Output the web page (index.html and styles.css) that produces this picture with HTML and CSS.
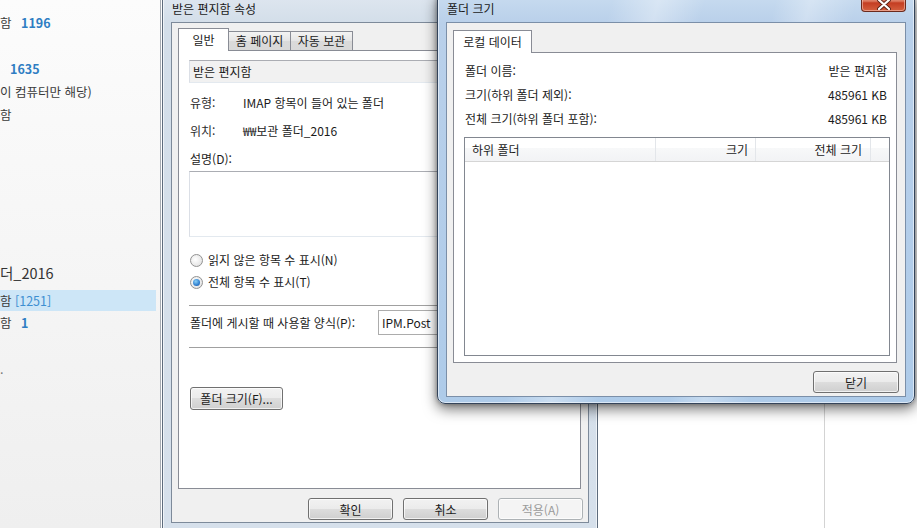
FILE: index.html
```html
<!DOCTYPE html>
<html lang="ko">
<head>
    <meta charset="UTF-8">
    <title>받은 편지함 속성 - 폴더 크기</title>
    <link rel="stylesheet" href="styles.css">
</head>
<body>
    <div class="outlook">
        <aside class="folders">
            <ul class="folder-list top-list">
                <li></li>
                <li>함 <span class="count">1196</span></li>
                <li></li>
                <li><span class="count first">1635</span></li>
                <li>이 컴퓨터만 해당)</li>
                <li>함</li>
            </ul>
            <ul class="folder-list group-list">
                <li class="group">더_2016</li>
                <li class="selected">함 <span class="unread">[1251]</span></li>
                <li>함 <span class="count">1</span></li>
                <li></li>
                <li class="tick">.</li>
            </ul>
        </aside>
        <main class="mail-area">
            <div class="pane-list"></div>
            <div class="pane-read"></div>
        </main>
    </div>

    <!-- properties dialog (inactive, behind) -->
    <div class="window props">
        <div class="titlebar"><span class="title">받은 편지함 속성</span></div>
        <div class="client">
            <div class="tabs">
                <span class="tab active tab-general">일반</span>
                <span class="tab tab-home">홈 페이지</span>
                <span class="tab tab-archive">자동 보관</span>
            </div>
            <div class="tab-panel">
                <div class="textbox readonly">받은 편지함</div>
                <div class="field"><span class="label">유형:</span><span>IMAP 항목이 들어 있는 폴더</span></div>
                <div class="field"><span class="label">위치:</span><span>₩₩보관 폴더_2016</span></div>
                <div class="caption">설명(D):</div>
                <div class="textbox memo"></div>
                <div class="radio first-radio"><span class="bullet"></span>읽지 않은 항목 수 표시(N)</div>
                <div class="radio checked"><span class="bullet"></span>전체 항목 수 표시(T)</div>
                <hr class="etched">
                <div class="form-row">
                    <span class="form-label">폴더에 게시할 때 사용할 양식(P):</span>
                    <span class="combo">IPM.Post</span>
                </div>
                <hr class="etched second">
                <button class="btn btn-size">폴더 크기(F)...</button>
            </div>
            <div class="dlg-buttons">
                <button class="btn">확인</button>
                <button class="btn">취소</button>
                <button class="btn" disabled>적용(A)</button>
            </div>
        </div>
    </div>

    <!-- folder size dialog (active) -->
    <div class="window size active-win">
        <div class="titlebar"><span class="title">폴더 크기</span></div>
        <span class="close-btn">
            <svg width="14" height="11" viewBox="0 0 14 11">
                <path d="M2 1 L12 10 M12 1 L2 10" stroke="#5a2116" stroke-width="4" stroke-linecap="round"/>
                <path d="M2 1 L12 10 M12 1 L2 10" stroke="#fff" stroke-width="2.2" stroke-linecap="round"/>
            </svg>
        </span>
        <div class="client">
            <div class="tabs">
                <span class="tab active tab-local">로컬 데이터</span>
            </div>
            <div class="tab-panel">
                <div class="info-row"><span>폴더 이름:</span><span>받은 편지함</span></div>
                <div class="info-row"><span>크기(하위 폴더 제외):</span><span>485961 KB</span></div>
                <div class="info-row"><span>전체 크기(하위 폴더 포함):</span><span>485961 KB</span></div>
                <div class="listview">
                    <div class="list-head">
                        <span class="col col-name">하위 폴더</span>
                        <span class="col col-size">크기</span>
                        <span class="col col-total">전체 크기</span>
                        <span class="col col-fill"></span>
                    </div>
                </div>
            </div>
            <div class="dlg-buttons">
                <button class="btn">닫기</button>
            </div>
        </div>
    </div>
</body>
</html>
```

FILE: styles.css
```css
* {
    box-sizing: border-box;
}

html, body {
    margin: 0;
    padding: 0;
}

body {
    width: 917px;
    height: 528px;
    overflow: hidden;
    position: relative;
    font-family: "Noto Sans CJK KR", "Noto Sans", sans-serif;
    font-size: 12px;
    color: #1b1b1b;
    background: #fff;
}

/* outlook behind the dialogs */
.outlook {
    display: flex;
    height: 528px;
}

.folders {
    width: 161px;
    flex-shrink: 0;
    border-right: 1px solid #a7acb3;
    background: linear-gradient(#fcfcfc, #efefef);
    overflow: hidden;
}

.folder-list {
    list-style: none;
    margin: 0;
    padding: 0;
}

.folder-list li {
    height: 23px;
    line-height: 23px;
    white-space: nowrap;
    color: #3a3a3a;
    font-size: 12.5px;
    margin-right: 4px;
}

.top-list {
    margin-top: -12px;
}

.count {
    font-weight: bold;
    color: #2f7ec3;
    margin-left: 6px;
}

.count.first {
    margin-left: 10px;
}

.group-list {
    margin-top: 135px;
}

.folder-list li.group {
    font-size: 14.5px;
    color: #333;
}

.folder-list li.selected {
    height: 21px;
    line-height: 21px;
    margin-top: 6px;
    background: #cde6f7;
}

.unread {
    color: #3d8fd1;
}

.folder-list li.tick {
    color: #777;
}

.mail-area {
    flex: 1;
    display: flex;
}

.pane-list {
    width: 664px;
    border-right: 1px solid #d3d3d3;
}

.pane-read {
    flex: 1;
}

/* windows */
.window {
    position: absolute;
    border: 1px solid #5d6b7c;
    border-radius: 8px;
    padding: 0 8px 8px 8px;
    background: linear-gradient(180deg, #dfe7f0 0%, #d3dee9 30px, #d6e0eb 100%);
    box-shadow: inset 0 0 0 1px rgba(255, 255, 255, 0.6);
}

.titlebar {
    height: 29px;
    padding: 8px 0 0 1px;
    line-height: 16px;
    color: #1a1a1a;
    white-space: nowrap;
}

.client {
    border: 1px solid #7d8a9a;
    background: #f0f0f0;
}

.props {
    left: 162px;
    top: -8px;
    width: 436px;
    height: 545px;
}

.props .client {
    height: 501px;
    padding: 5px 7px 0 6px;
}

.size {
    left: 437px;
    top: -8px;
    width: 478px;
    height: 412px;
    padding-bottom: 6px;
    border-color: #34445a;
    background:
        linear-gradient(105deg, rgba(255,255,255,0) 30%, rgba(255,255,255,0.35) 38%, rgba(255,255,255,0) 46%, rgba(255,255,255,0) 58%, rgba(255,255,255,0.3) 64%, rgba(255,255,255,0) 72%),
        linear-gradient(180deg, #c9dcf0 0%, #b9d0ea 30px, #aecbe9 100%);
    box-shadow: inset 0 0 0 1px rgba(255, 255, 255, 0.55), 0 5px 14px rgba(0, 0, 0, 0.55), 0 0 5px rgba(0, 0, 0, 0.35);
}

.size .client {
    height: 375px;
    padding: 7px 8px 0 6px;
    border-color: #7b8fa8;
}

.close-btn {
    position: absolute;
    top: 0;
    right: 8px;
    width: 45px;
    height: 19px;
    display: flex;
    align-items: center;
    justify-content: center;
    padding-top: 4px;
    border: 1px solid #6b2a1d;
    border-top: none;
    border-radius: 0 0 4px 4px;
    background: linear-gradient(#eab3a5 0%, #dc7a60 45%, #c43d22 55%, #d4603f 100%);
    box-shadow: inset 0 0 0 1px rgba(255, 220, 210, 0.5);
}

/* tabs */
.tabs {
    display: flex;
    align-items: flex-end;
    height: 22px;
}

.tab {
    height: 19px;
    line-height: 18px;
    text-align: center;
    border: 1px solid #898c95;
    border-bottom: none;
    border-left: none;
    background: linear-gradient(#f3f3f3, #e5e5e5 50%, #dadada 50%, #d9d9d9);
    white-space: nowrap;
    color: #1b1b1b;
}

.tab.active {
    position: relative;
    z-index: 1;
    height: 23px;
    line-height: 22px;
    margin-bottom: -1px;
    border-left: 1px solid #898c95;
    background: #fff;
}

.tab-general {
    width: 51px;
    margin-left: 0;
}

.tab-home {
    width: 62px;
}

.tab-archive {
    width: 62px;
}

.tab-local {
    width: 79px;
}

.tab-panel {
    border: 1px solid #898c95;
    background: #fff;
}

.props .tab-panel {
    height: 439px;
    padding: 9px 10px;
}

.size .tab-panel {
    height: 311px;
    padding: 6px 6px 0 10px;
}

/* properties page */
.textbox {
    border: 1px solid #abadb3;
    border-left-color: #dbdfe6;
    border-right-color: #e2e3ea;
    border-bottom-color: #e3e9ef;
}

.textbox.readonly {
    height: 23px;
    line-height: 21px;
    padding-left: 3px;
    background: #f1f1f1;
}

.field {
    display: flex;
    margin-top: 12px;
    line-height: 16px;
    padding-left: 1px;
}

.field .label {
    width: 53px;
    color: #2b2b2b;
}

.caption {
    margin-top: 12px;
    line-height: 16px;
    padding-left: 1px;
}

.textbox.memo {
    height: 66px;
    margin-top: 4px;
    background: #fff;
}

.radio {
    display: flex;
    align-items: center;
    gap: 5px;
    line-height: 16px;
    margin-top: 6px;
    padding-left: 1px;
}

.radio.first-radio {
    margin-top: 15px;
}

.bullet {
    width: 13px;
    height: 13px;
    border-radius: 50%;
    border: 1px solid #929292;
    background: radial-gradient(circle at 40% 40%, #ffffff, #e6e6e6 70%, #d4d4d4);
    position: relative;
}

.radio.checked .bullet::after {
    content: "";
    position: absolute;
    left: 2px;
    top: 2px;
    width: 7px;
    height: 7px;
    border-radius: 50%;
    background: radial-gradient(circle at 40% 35%, #8ad0f7, #2f7fcf 60%, #1d4f96);
}

.etched {
    border: 0;
    border-top: 1px solid #a0a0a0;
    border-bottom: 1px solid #fff;
    height: 0;
    margin: 15px 0 0 0;
}

.etched.second {
    margin-top: 12px;
}

.form-row {
    display: flex;
    align-items: center;
    height: 25px;
    margin-top: 3px;
}

.form-label {
    width: 189px;
    white-space: nowrap;
    padding-left: 1px;
}

.combo {
    flex: 1;
    height: 25px;
    line-height: 23px;
    padding-left: 3px;
    border: 1px solid #acacac;
    background: #fff;
}

/* buttons */
.btn {
    font-family: inherit;
    font-size: 12px;
    color: #1b1b1b;
    height: 22px;
    padding: 0;
    border: 1px solid #707070;
    border-radius: 3px;
    background: linear-gradient(#f2f2f2 0%, #ebebeb 50%, #dddddd 50%, #cfcfcf 100%);
    box-shadow: inset 0 0 0 1px rgba(255, 255, 255, 0.7);
}

.btn:disabled {
    color: #9a9a9a;
    border-color: #adb2b5;
    background: #f4f4f4;
}

.btn-size {
    display: block;
    width: 93px;
    height: 23px;
    margin: 38px 0 0 1px;
}

.dlg-buttons {
    display: flex;
    justify-content: flex-end;
    gap: 10px;
    margin-right: -2px;
}

.props .dlg-buttons {
    margin-top: 9px;
}

.props .dlg-buttons .btn {
    width: 85px;
}

.size .dlg-buttons {
    margin-top: 8px;
}

.size .dlg-buttons .btn {
    width: 86px;
}

/* folder size page */
.info-row {
    display: flex;
    justify-content: space-between;
    height: 24px;
    line-height: 24px;
    padding: 0 3px 0 1px;
    white-space: nowrap;
}

.listview {
    height: 219px;
    margin-top: 6px;
    border: 1px solid #828790;
    background: #fff;
}

.list-head {
    display: flex;
    height: 24px;
    border-bottom: 1px solid #d5d5d5;
    background: linear-gradient(#ffffff 0%, #ffffff 45%, #f7f8f9 45%, #f2f3f5 100%);
}

.col {
    line-height: 23px;
    border-right: 1px solid #e3e6ea;
    white-space: nowrap;
}

.col-name {
    width: 191px;
    padding-left: 7px;
}

.col-size {
    width: 100px;
    text-align: right;
    padding-right: 7px;
}

.col-total {
    width: 115px;
    text-align: right;
    padding-right: 8px;
}

.col-fill {
    flex: 1;
    border-right: none;
}
```
